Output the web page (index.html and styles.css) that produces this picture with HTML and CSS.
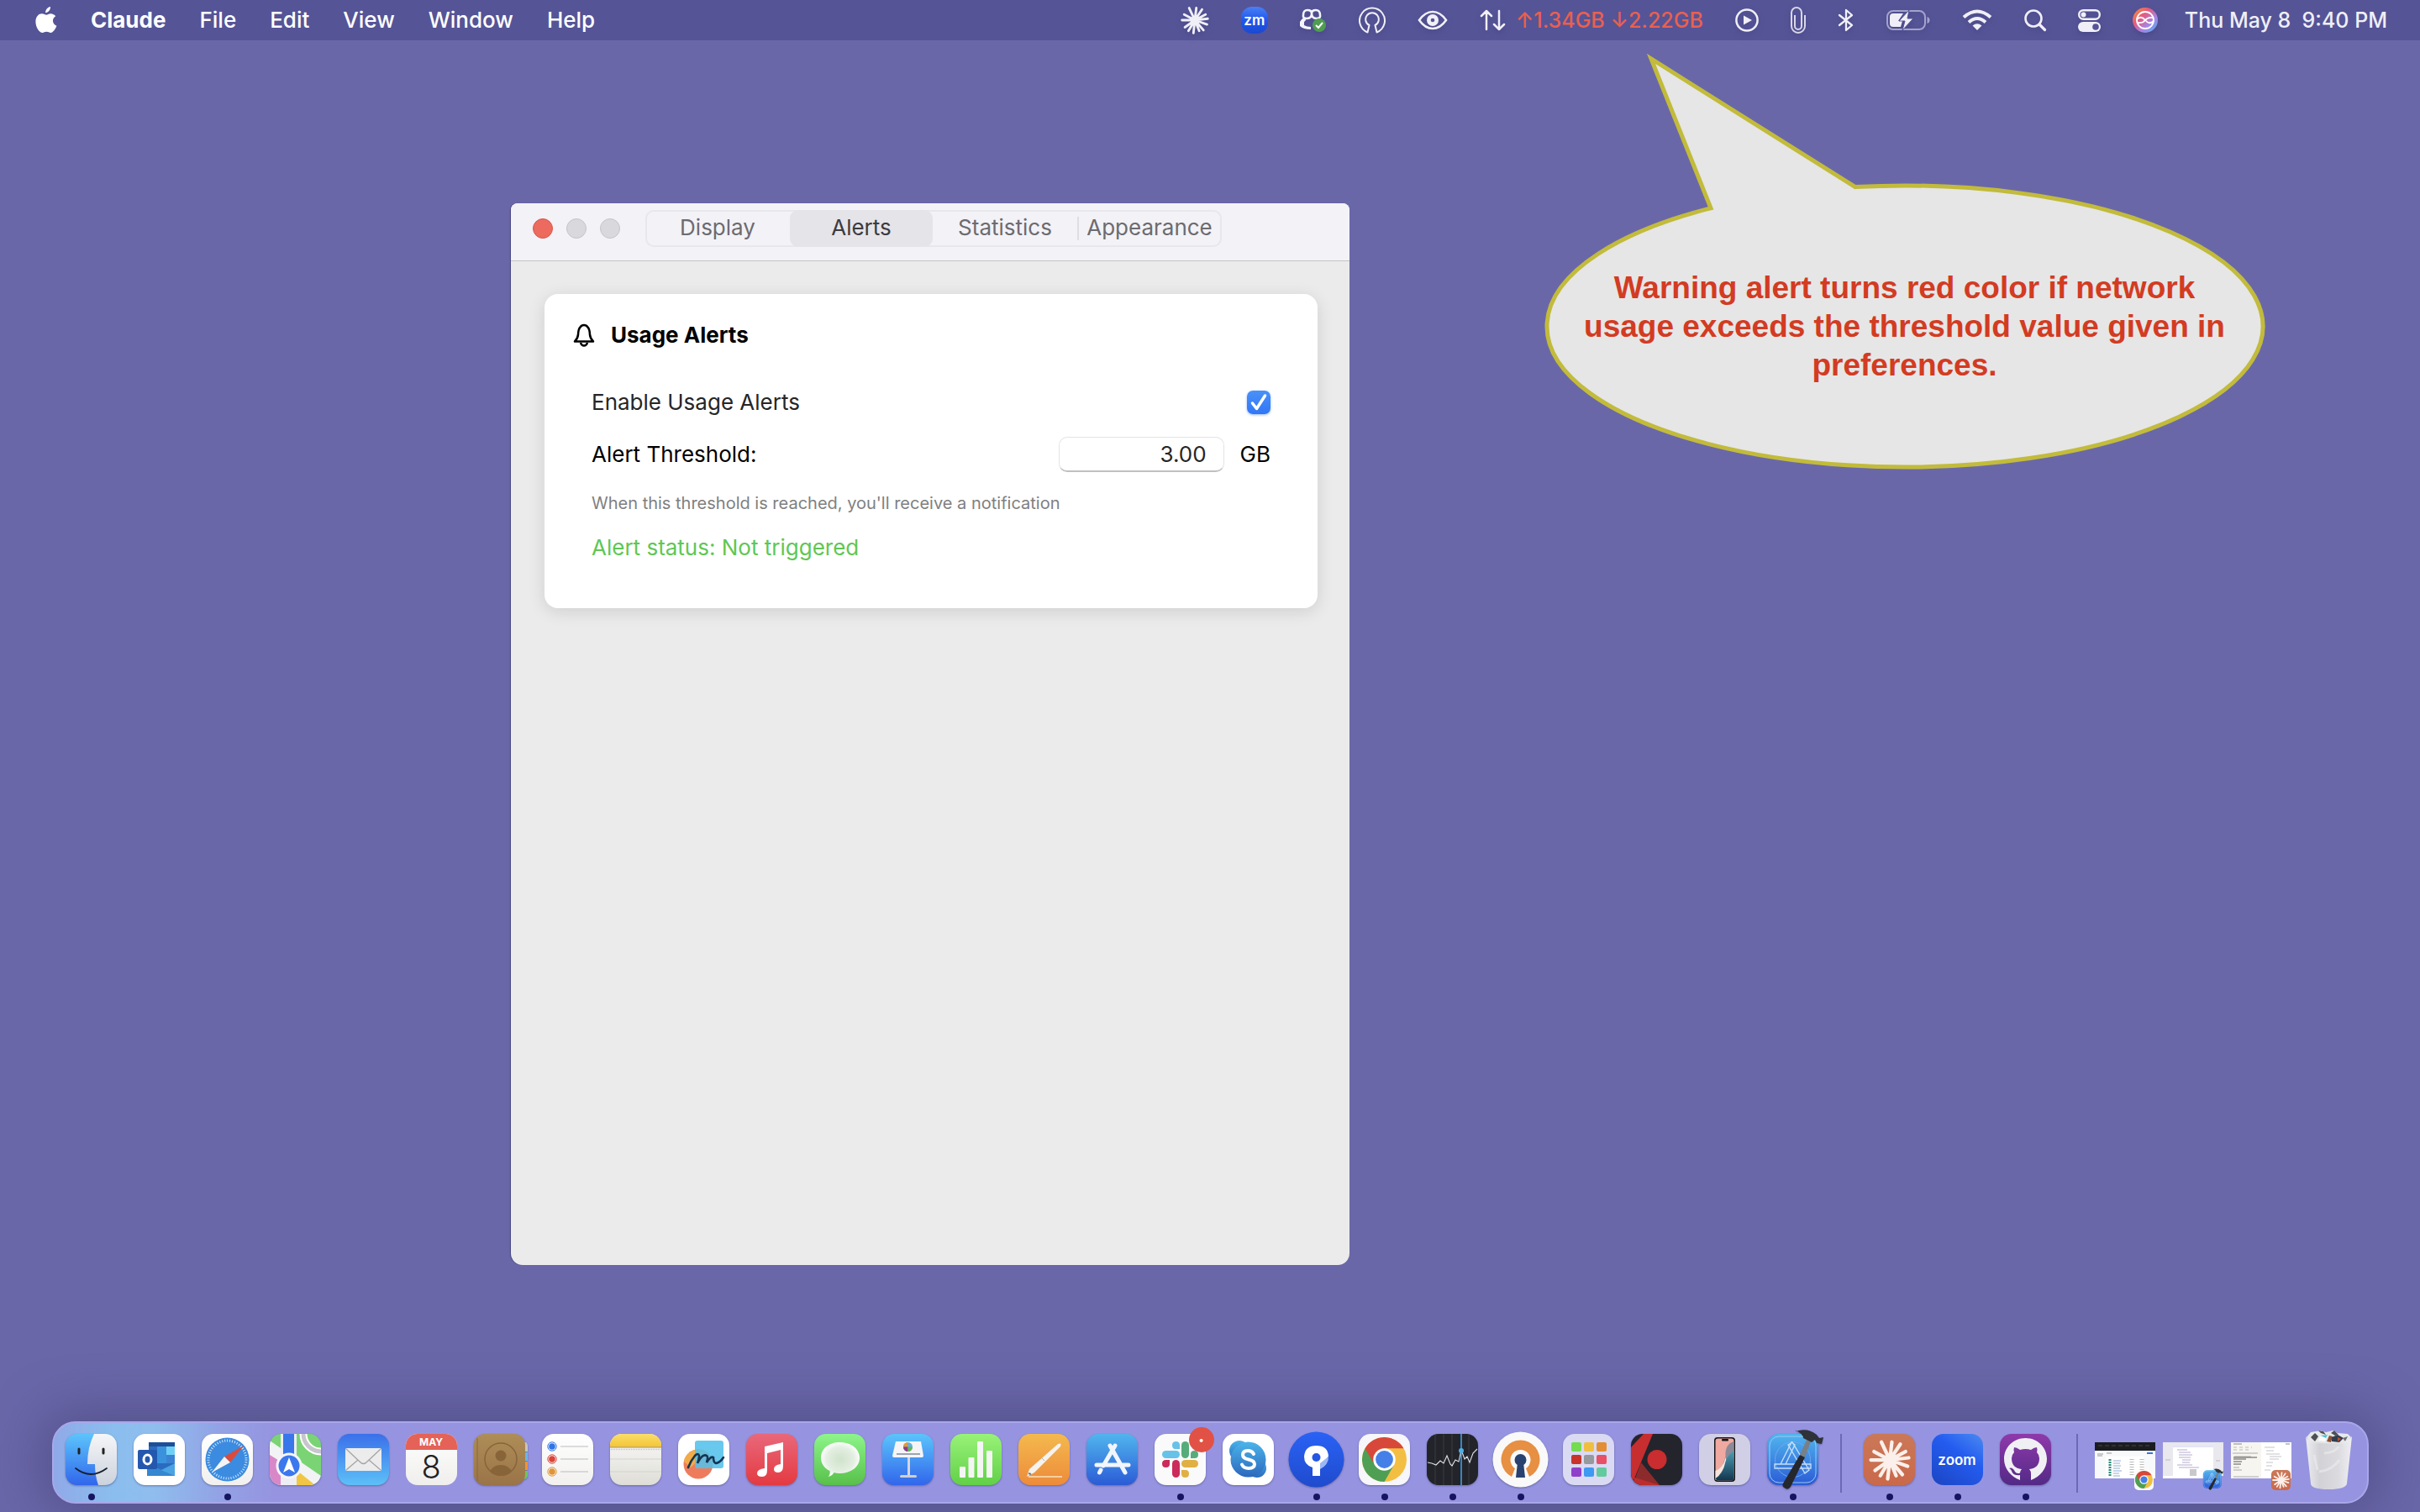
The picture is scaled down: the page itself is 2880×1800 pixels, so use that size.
FILE: index.html
```html
<!DOCTYPE html>
<html lang="en">
<head>
<meta charset="utf-8">
<title>Desktop</title>
<link rel="stylesheet" href="styles.css">
</head>
<body>
<svg class="defs" aria-hidden="true">
  <defs>
    <linearGradient id="g-blue" x1="0" y1="0" x2="0" y2="1"><stop offset="0" stop-color="#5cc4fb"/><stop offset="1" stop-color="#3166ec"/></linearGradient>
    <linearGradient id="g-mail" x1="0" y1="0" x2="0" y2="1"><stop offset="0" stop-color="#3a70ea"/><stop offset="1" stop-color="#5dc0f7"/></linearGradient>
    <linearGradient id="g-grey" x1="0" y1="0" x2="0" y2="1"><stop offset="0" stop-color="#f5f6f8"/><stop offset="1" stop-color="#ccd2dc"/></linearGradient>
    <linearGradient id="g-white" x1="0" y1="0" x2="0" y2="1"><stop offset="0" stop-color="#fff"/><stop offset="1" stop-color="#f1f0ee"/></linearGradient>
    <linearGradient id="g-yellow" x1="0" y1="0" x2="0" y2="1"><stop offset="0" stop-color="#f9de6b"/><stop offset="1" stop-color="#f4c433"/></linearGradient>
    <linearGradient id="g-notes" x1="0" y1="0" x2="0" y2="1"><stop offset="0" stop-color="#fafafa"/><stop offset="1" stop-color="#deddd6"/></linearGradient>
    <linearGradient id="g-red" x1="0" y1="0" x2="0" y2="1"><stop offset="0" stop-color="#e9687a"/><stop offset="1" stop-color="#e43a41"/></linearGradient>
    <linearGradient id="g-green" x1="0" y1="0" x2="0" y2="1"><stop offset="0" stop-color="#8df58a"/><stop offset="1" stop-color="#58c04a"/></linearGradient>
    <linearGradient id="g-lime" x1="0" y1="0" x2="0" y2="1"><stop offset="0" stop-color="#98f277"/><stop offset="1" stop-color="#62d048"/></linearGradient>
    <linearGradient id="g-orange" x1="0" y1="0" x2="0" y2="1"><stop offset="0" stop-color="#f4b94e"/><stop offset="1" stop-color="#ed8b3a"/></linearGradient>
    <linearGradient id="g-store" x1="0" y1="0" x2="0" y2="1"><stop offset="0" stop-color="#51b5ee"/><stop offset="1" stop-color="#2b5bd6"/></linearGradient>
    <linearGradient id="g-brown" x1="0" y1="0" x2="0" y2="1"><stop offset="0" stop-color="#ae8d57"/><stop offset="1" stop-color="#9a7448"/></linearGradient>
    <linearGradient id="g-purple" x1="0" y1="0" x2="0" y2="1"><stop offset="0" stop-color="#8f39ab"/><stop offset="1" stop-color="#532a86"/></linearGradient>
    <linearGradient id="g-src" x1="0" y1="0" x2="0" y2="1"><stop offset="0" stop-color="#2a62f5"/><stop offset="1" stop-color="#1f4bcd"/></linearGradient>
    <linearGradient id="g-skype" x1="0" y1="0" x2="0" y2="1"><stop offset="0" stop-color="#4bb4ea"/><stop offset="1" stop-color="#2b68bd"/></linearGradient>
    <linearGradient id="g-clay" x1="0" y1="0" x2="0" y2="1"><stop offset="0" stop-color="#cb7858"/><stop offset="1" stop-color="#c9694a"/></linearGradient>
    <linearGradient id="g-bin" x1="0" y1="0" x2="1" y2="0"><stop offset="0" stop-color="#f0f0f2"/><stop offset=".3" stop-color="#d4d4d6"/><stop offset=".7" stop-color="#dededf"/><stop offset="1" stop-color="#f3f3f4"/></linearGradient>
    <linearGradient id="g-sea" x1="0" y1="0" x2="0" y2="1"><stop offset="0" stop-color="#4f9fb5"/><stop offset="1" stop-color="#12364f"/></linearGradient>
    <linearGradient id="g-siri" x1="0" y1="0" x2="1" y2="1"><stop offset="0" stop-color="#f0a030"/><stop offset=".35" stop-color="#e8597c"/><stop offset=".65" stop-color="#a884e6"/><stop offset="1" stop-color="#41b6f5"/></linearGradient>
    <radialGradient id="g-bubble"><stop offset="0" stop-color="#cfe3cb"/><stop offset=".7" stop-color="#e3eee1"/><stop offset="1" stop-color="#fafcfa"/></radialGradient>
    <clipPath id="tile"><rect width="61" height="61" rx="14"/></clipPath>
    <symbol id="burst" viewBox="-20 -20 40 40">
      <g stroke="currentColor" stroke-width="3.400" stroke-linecap="round">
        <path d="M0 0 2-17M0 0 10-15M0 0 15-8M0 0 18-2M0 0 17 6M0 0 12 14M0 0 6 15M0 0-2 18M0 0-9 15M0 0-14 10M0 0-18 0M0 0-15-8M0 0-8-17" />
      </g>
      <circle r="6" fill="currentColor"/>
    </symbol>
    <symbol id="chrome" viewBox="0 0 54 54">
      <circle cx="27" cy="27" r="27" fill="#f3bf42"/>
      <path d="M27 27 3.600 13.500A27 27 0 0 0 27 54L38.700 33.700z" fill="#4e9f53"/>
      <path d="M27 13.500H50.400A27 27 0 0 0 3.600 13.500L15.300 33.700z" fill="#d8483a"/>
      <circle cx="27" cy="27" r="13.500" fill="#fff"/>
      <circle cx="27" cy="27" r="10.600" fill="#4580e8"/>
    </symbol>
    <symbol id="xcode" viewBox="0 0 68 78">
      <rect x="0" y="6" width="61" height="61" rx="14" fill="url(#g-store)"/>
      <rect x="3" y="9" width="55" height="55" rx="11" fill="none" stroke="#9bc9f5" stroke-width="1"/>
      <circle cx="30.500" cy="36.500" r="21" fill="none" stroke="#6ba9f0" stroke-width="1"/>
      <g fill="none" stroke="#c3defa" stroke-width="1.400"><path d="m25 19 5-3 20 33-5 4zM33 19l-4-3-13 26h6zM9 42h43v5H9z"/></g>
      <path d="M39 31 47 13 52 15 45 34z" fill="#7a7f86"/>
      <path d="M39 31 45 34 28 69q-3 4-6 2-5-2-3-6z" fill="#25272d"/>
      <path d="M34 3Q48-2 59 7l3 4 5-1-2 8-6-1-2-4-4 3-10-5q0-5-9-9z" fill="#2f3238"/>
    </symbol>
  </defs>
</svg>

<header class="menubar">
  <nav class="menus">
    <button class="menu-icon" aria-label="System menu"><svg width="26" height="32" viewBox="0 0 26 32"><path fill="#fff" d="M18 0c.3 3.600-2.700 7.200-5.800 7.200C11.800 3.800 15 .4 18 0zM18.200 8.200c2.600 0 4.700 1.300 6 3.100-4.900 3-4 9.400 1.200 11.400-1.300 3.600-4.300 8.300-7.100 8.300-1.800 0-2.600-1.200-4.900-1.200S10.200 31 8.600 31C4.500 31 .4 24 .4 17.800.4 11.600 4.300 8.300 7.900 8.300c2.200 0 4 1.500 5.300 1.500 1.300 0 3-1.600 5-1.600z"/></svg></button>
    <button class="menu app">Claude</button>
    <button class="menu">File</button>
    <button class="menu">Edit</button>
    <button class="menu">View</button>
    <button class="menu">Window</button>
    <button class="menu">Help</button>
  </nav>
  <div class="status">
    <button aria-label="Claude"><svg width="34" height="34"><use href="#burst"/></svg></button>
    <button class="zm">zm</button>
    <button aria-label="Copilot"><svg width="32" height="30" viewBox="0 0 32 30"><g fill="none" stroke="#f4f3fa" stroke-width="2.600"><path d="M14 7q0 6-5.500 6T4 9q0-6 5-6 5 0 5 4zM14 7q0 6 5.500 6T24 9q0-6-5-6-5 0-5 4z"/></g><path d="M5 12q-4 2-5 5v5q4 4 13 4v-3q-5 0-8-2v-4q3-2 2-5z" fill="#f4f3fa"/><circle cx="23" cy="21" r="8" fill="#4f9d51"/><path d="m19 21 3 3 5-6" fill="none" stroke="#fff" stroke-width="2"/></svg></button>
    <button aria-label="VPN"><svg width="32" height="32" viewBox="0 0 32 32"><path d="M10.500 30.500a15 15 0 1 1 11 0L19.500 22a7.800 7.800 0 1 0-7 0z" fill="none" stroke="#f0eff7" stroke-width="2" stroke-linejoin="round"/></svg></button>
    <button aria-label="Visibility"><svg width="36" height="24" viewBox="0 0 36 24"><path d="M2 12Q9 2 18 2t16 10Q27 22 18 22T2 12z" fill="none" stroke="#f0eff7" stroke-width="2.600"/><circle cx="18" cy="12" r="7" fill="#f0eff7"/><circle cx="18" cy="12" r="2.300" fill="#555497"/></svg></button>
    <button class="traffic"><svg width="31" height="26" viewBox="0 0 31 26"><path d="M8 24V2M2 8l6-6 6 6M23 2v22m-6-6 6 6 6-6" fill="none" stroke="#f0eff7" stroke-width="2.500" stroke-linecap="round" stroke-linejoin="round"/></svg><span>↑1.34GB ↓2.22GB</span></button>
    <button aria-label="Now playing"><svg width="28" height="28" viewBox="0 0 28 28"><circle cx="14" cy="14" r="12.600" fill="none" stroke="#f0eff7" stroke-width="2.500"/><path d="m10 8.500 10 5.500-10 5.500z" fill="#f0eff7"/></svg></button>
    <button aria-label="Clipboard"><svg width="18" height="32" viewBox="0 0 18 32"><path d="M17 10v13a8 8 0 0 1-16 0V7a6 6 0 0 1 12 0v16a4 4 0 0 1-8 0V10" fill="none" stroke="#d8d7ea" stroke-width="2"/></svg></button>
    <button aria-label="Bluetooth"><svg width="20" height="28" viewBox="0 0 20 28"><path d="m2 8 15 12-7 6V2l7 6L2 20" fill="none" stroke="#f0eff7" stroke-width="2.300" stroke-linejoin="round" stroke-linecap="round"/></svg></button>
    <button aria-label="Battery"><svg width="52" height="26" viewBox="0 0 52 26"><rect x="1" y="2" width="45" height="22" rx="7" fill="none" stroke="#a4a3cb" stroke-width="2"/><path d="M48.500 9q3 1 3 4t-3 4z" fill="#a4a3cb"/><path d="M8 5h12l-6 9h5l-2 7H8q-4 0-4-4V9q0-4 4-4z" fill="#f0eff7"/><path d="M27 1 15 14h7l-3 11 13-14h-7z" fill="#f0eff7" stroke="#555497" stroke-width="1"/></svg></button>
    <button aria-label="Wi-Fi"><svg width="36" height="26" viewBox="0 0 36 26"><g fill="none" stroke="#f0eff7" stroke-width="4"><path d="M2 9.500q16-14 32 0M8 15.500q10-9 20 0"/></g><path d="m18 25-5.500-5.500q5.500-4.500 11 0z" fill="#f0eff7"/></svg></button>
    <button aria-label="Search"><svg width="26" height="26" viewBox="0 0 26 26"><circle cx="11" cy="11" r="9.500" fill="none" stroke="#f0eff7" stroke-width="2.600"/><path d="m18 18 6.500 6.500" stroke="#f0eff7" stroke-width="3.200" stroke-linecap="round"/></svg></button>
    <button aria-label="Control center"><svg width="27" height="27" viewBox="0 0 27 27"><rect x="1.200" y="1.200" width="24.600" height="10.500" rx="5.200" fill="none" stroke="#f0eff7" stroke-width="2.400"/><circle cx="6.500" cy="6.500" r="3" fill="#f0eff7"/><rect y="15" width="27" height="12" rx="6" fill="#f0eff7"/><circle cx="21" cy="21" r="3.800" fill="#555497"/></svg></button>
    <div class="clock-group">
      <button aria-label="Siri"><svg width="30" height="30" viewBox="0 0 30 30"><circle cx="15" cy="15" r="15" fill="url(#g-siri)"/><g fill="none" stroke="#fff" stroke-width="1.800"><circle cx="15" cy="15" r="10"/><path d="M5 14q5-5 10 1t10 1M6 18q6 1 9-3t9-3"/></g></svg></button>
      <button class="clock">Thu May 8&nbsp; 9:40 PM</button>
    </div>
  </div>
</header>

<main class="desktop">
  <section class="window" aria-label="Preferences">
    <div class="titlebar">
      <div class="lights">
        <button class="light close" aria-label="Close"></button>
        <button class="light" aria-label="Minimize"></button>
        <button class="light" aria-label="Zoom"></button>
      </div>
      <div class="tabs" role="tablist">
        <button role="tab">Display</button>
        <button role="tab" class="selected" aria-selected="true">Alerts</button>
        <button role="tab">Statistics</button>
        <button role="tab" class="divided">Appearance</button>
      </div>
    </div>
    <div class="card">
      <h2><svg width="26" height="28" viewBox="0 0 26 28"><path d="M2 21.500h22q-3.500-3.500-4-8-.3-7-2.500-9Q16 2 13 2T8.500 4.500Q6.300 6.500 6 13.500q-.5 4.500-4 8z" fill="none" stroke="#000" stroke-width="2.500" stroke-linejoin="round"/><path d="M9 23q1 3.500 4 3.500t4-3.500" fill="none" stroke="#000" stroke-width="2.500"/></svg>Usage Alerts</h2>
      <div class="rows">
        <div class="row"><label class="soft" for="enable">Enable Usage Alerts</label><span class="check"><input type="checkbox" id="enable" checked><svg width="28" height="28" viewBox="0 0 28 28"><path d="m6.500 15 5 6.500L21.500 6" fill="none" stroke="#fff" stroke-width="3.500" stroke-linecap="round" stroke-linejoin="round"/></svg></span></div>
        <div class="row"><label for="limit">Alert Threshold:</label><span class="field"><input type="text" id="limit" value="3.00">GB</span></div>
        <p class="hint">When this threshold is reached, you'll receive a notification</p>
        <p class="state">Alert status: Not triggered</p>
      </div>
    </div>
  </section>

  <aside class="balloon">
    <svg width="861" height="504" viewBox="0 0 861 504"><path d="M372 162.614A426 167.500 0 1 1 200 187.764L129 10z" fill="#e6e6e6" stroke="#c2bb3b" stroke-width="5"/></svg>
    <p>Warning alert turns red color if network<br>usage exceeds the threshold value given in<br>preferences.</p>
  </aside>
</main>

<footer class="dock">
  <button class="app-icon running" aria-label="Finder"><svg viewBox="0 0 61 61"><g clip-path="url(#tile)"><path fill="url(#g-blue)" d="M0 0h61v61H0z"/><path d="M34 0q-8 16-8 36h9q0 14 4 25h22V0z" fill="url(#g-grey)"/></g><path d="M16 18v5M45 18v5" stroke="#222" stroke-width="3" stroke-linecap="round"/><path d="M12 41q18 14 37 0" fill="none" stroke="#16202e" stroke-width="1.800" stroke-linecap="round"/></svg></button>
  <button class="app-icon" aria-label="Outlook"><svg viewBox="0 0 61 61"><rect width="61" height="61" rx="14" fill="#fff"/><path d="M18 10h31v40H16V30h2z" fill="#2a6bc0"/><path d="M18 10h31v5H18z" fill="#1d4f99"/><path d="M39 15h10v10H39z" fill="#6fd0f7"/><path d="M28 15h11v20H28z" fill="#3a92dc"/><path d="M39 25h10v10H39z" fill="#3c82d2"/><path d="M16 50V36l17 7 16-8v15z" fill="#4aa3e2"/><path d="m16 36 33 14H16z" fill="#3587d0"/><rect x="5" y="19" width="23" height="23" rx="2" fill="#2458ae"/><ellipse cx="16.500" cy="30.500" rx="4.500" ry="5.500" fill="none" stroke="#fff" stroke-width="3"/></svg></button>
  <button class="app-icon running" aria-label="Safari"><svg viewBox="0 0 61 61"><rect width="61" height="61" rx="14" fill="url(#g-white)"/><circle cx="30.500" cy="30.500" r="26" fill="#3b8be0"/><circle cx="30.500" cy="30.500" r="22.500" fill="none" stroke="#d3e7fa" stroke-width="3" stroke-dasharray="1 2"/><path d="M50 14 27 27l7 7z" fill="#dc4a3c"/><path d="m12 46 15-19 7 7z" fill="#f4f4f4"/></svg></button>
  <button class="app-icon" aria-label="Maps"><svg viewBox="0 0 61 61"><g clip-path="url(#tile)"><path fill="#7ad474" d="M0 0h61v61H0z"/><path d="M0 8 61 50v11H0z" fill="#f2f3f4"/><path d="M0 25l13 8v28H0z" fill="#d888c8"/><path d="M33 44 54 61H30z" fill="#f1c644"/><path d="M13 0h19v61H13z" fill="#ededf3"/><path d="M16 0h13v40H16z" fill="#3877ea"/><circle cx="61" cy="0" r="21" fill="none" stroke="#fff" stroke-width="9"/><circle cx="61" cy="0" r="21" fill="none" stroke="#c6c6cc" stroke-width="5"/></g><circle cx="23" cy="38" r="14" fill="#3b78ee" stroke="#f5f5f8" stroke-width="3"/><path d="m23 28 7 18-7-4-7 4z" fill="#fff"/></svg></button>
  <button class="app-icon" aria-label="Mail"><svg viewBox="0 0 61 61"><rect width="61" height="61" rx="14" fill="url(#g-mail)"/><rect x="9" y="17" width="43" height="27" rx="2" fill="#ececec"/><path d="m10 18 16 15q4.500 5 9 0l16-15M10 43l14-12M51 43 37 31" fill="none" stroke="#a5a5a5" stroke-width="1.300"/></svg></button>
  <button class="app-icon calendar" aria-label="Calendar"><span class="month">MAY</span><span class="day">8</span></button>
  <button class="app-icon" aria-label="Contacts"><svg viewBox="0 0 61 61"><path d="M58 10h4q2 2 2 4v7h-6z" fill="#c8c6b8"/><path d="M58 22h6v10h-6z" fill="#68b7e8"/><path d="M58 33h6v10h-6z" fill="#ef9336"/><path d="M58 44h6v6q-1 4-6 4z" fill="#69c95c"/><rect width="61" height="61" rx="13" fill="url(#g-brown)"/><path d="M4 5v51" stroke="#8a6839" stroke-width="1"/><g fill="#886439"><circle cx="32" cy="26" r="6.500"/><path d="M19 45q4-8 13-8t13 8q-5 5-13 5t-13-5z"/></g><circle cx="32" cy="30" r="19" fill="none" stroke="#886439" stroke-width="1.500"/></svg></button>
  <button class="app-icon" aria-label="Reminders"><svg viewBox="0 0 61 61"><rect width="61" height="61" rx="14" fill="url(#g-white)"/><g stroke="#bbb" stroke-width="1.200"><path d="M22 15h33M22 30h33M22 45h33"/></g><g stroke-width="1"><circle cx="12" cy="15" r="3.800" fill="#3074e8"/><circle cx="12" cy="15" r="5.200" fill="none" stroke="#3074e8"/><circle cx="12" cy="30" r="3.800" fill="#dc4438"/><circle cx="12" cy="30" r="5.200" fill="none" stroke="#dc4438"/><circle cx="12" cy="45" r="3.800" fill="#e29536"/><circle cx="12" cy="45" r="5.200" fill="none" stroke="#e29536"/></g></svg></button>
  <button class="app-icon" aria-label="Notes"><svg viewBox="0 0 61 61"><g clip-path="url(#tile)"><path fill="url(#g-notes)" d="M0 0h61v61H0z"/><path fill="url(#g-yellow)" d="M0 0h61v16H0z"/></g><path d="M0 16h61" stroke="#9a958a" stroke-width="1"/><path d="M1 18.500h59" stroke="#c4c2bb" stroke-width="1.500" stroke-dasharray="1 1"/><path d="M0 30h61M0 45h61" stroke="#d4d3ce" stroke-width="1"/></svg></button>
  <button class="app-icon" aria-label="Freeform"><svg viewBox="0 0 61 61"><rect width="61" height="61" rx="14" fill="#fff"/><circle cx="24" cy="36" r="17.500" fill="#ee7c5c"/><path d="M7 33a17.500 17.500 0 0 1 28-11L15 40z" fill="#f1ac4a"/><rect x="20" y="8" width="34" height="33" rx="3" fill="#54c0ea" opacity=".88"/><path d="M12 40q3-8 8-14 4-4 5 0 0 4-2 9 6-12 11-9 2 1 0 8 5-8 8-6 0 6 3 7 5-1 9-7" fill="none" stroke="#153350" stroke-width="2.600" stroke-linecap="round"/></svg></button>
  <button class="app-icon" aria-label="Music"><svg viewBox="0 0 61 61"><rect width="61" height="61" rx="14" fill="url(#g-red)"/><path d="M22 15 44 10v28q0 8-6 8-5 0-5-4 0-5 8-6V19l-16 4v20q0 8-6 8-6 0-6-4 0-5 9-6z" fill="#fff"/></svg></button>
  <button class="app-icon" aria-label="Messages"><svg viewBox="0 0 61 61"><rect width="61" height="61" rx="14" fill="url(#g-green)"/><path d="M30.500 10C44 10 54 18 54 28.500S44 47 30.500 47q-4 0-7-1-2 4-7 5 3-3 2-7C12 41 8 35 8 28.500 8 18 17 10 30.500 10z" fill="url(#g-bubble)"/></svg></button>
  <button class="app-icon" aria-label="Keynote"><svg viewBox="0 0 61 61"><rect width="61" height="61" rx="14" fill="url(#g-blue)"/><path d="M30 27h3v24h-3z" fill="#d4d6da"/><rect x="21" y="49" width="20" height="3" rx="1.500" fill="#cfcfd2"/><path d="M16 9h30l3 17q0 2-2 2H14q-2 0-2-2z" fill="#f5f5f7"/><path d="M17 24h28" stroke="#7f8a9b" stroke-width="1.500"/><circle cx="30.500" cy="15.500" r="5.500" fill="#5fb1e0"/><path d="M30.500 15.500V10a5.500 5.500 0 0 0-5.500 5.500z" fill="#e09a35"/><path d="M30.500 15.500H25a5.500 5.500 0 0 0 5.500 5.500z" fill="#94368b"/><path d="M30.500 15.500h5.500a5.500 5.500 0 0 1-5.500 5.500z" fill="#64b84f"/></svg></button>
  <button class="app-icon" aria-label="Numbers"><svg viewBox="0 0 61 61"><rect width="61" height="61" rx="14" fill="url(#g-lime)"/><g fill="#f4f6f4"><rect x="11" y="39" width="7" height="13" rx="1"/><rect x="21.500" y="28" width="7" height="24" rx="1"/><rect x="32" y="9" width="7" height="43" rx="1"/><rect x="43" y="20" width="7" height="32" rx="1"/></g></svg></button>
  <button class="app-icon" aria-label="Pages"><svg viewBox="0 0 61 61"><rect width="61" height="61" rx="14" fill="url(#g-orange)"/><path d="M12 51h40" stroke="#f8cf9b" stroke-width="1.800"/><path d="m10 51 3-9 34-30q5-2 3 3L19 46z" fill="#f5f3f0"/><path d="m12 47 3 1" stroke="#777" stroke-width="2"/><path d="m28 29 3 3" stroke="#b5b0a8"/></svg></button>
  <button class="app-icon" aria-label="App Store"><svg viewBox="0 0 61 61"><rect width="61" height="61" rx="14" fill="url(#g-store)"/><g stroke="#f1f5fc" stroke-width="5" stroke-linecap="round"><path d="M12 37h38M28 14l18 32M34 14 20 38M17 43l-1.500 3"/></g></svg></button>
  <button class="app-icon running" aria-label="Slack, new activity"><svg viewBox="0 0 61 61"><rect width="61" height="61" rx="14" fill="#fafafa"/><g fill="#67c2e8"><rect x="9" y="20" width="21" height="9" rx="4.500"/><path d="M30 18h-5q-4 0-4-4.500T25.500 9 30 13.500z"/></g><g fill="#56ad7b"><rect x="32" y="9" width="9" height="20" rx="4.500"/><path d="M43 29v-5q0-4 4.500-4t4.500 4.500-4.500 4.500z"/></g><g fill="#cb2a5b"><rect x="21" y="31" width="9" height="21" rx="4.500"/><path d="M18 31v5q0 4-4.500 4T9 35.500 13.500 31z"/></g><g fill="#e0b044"><rect x="32" y="31" width="20" height="9" rx="4.500"/><path d="M32 43h5q4 0 4 4.500t-4.500 4.500-4.500-4.500z"/></g></svg><span class="badge">•</span></button>
  <button class="app-icon" aria-label="Skype"><svg viewBox="0 0 61 61"><rect width="61" height="61" rx="14" fill="#fff"/><g fill="url(#g-skype)"><circle cx="20" cy="20" r="12"/><circle cx="41" cy="41" r="11"/><circle cx="30.500" cy="30.500" r="21"/></g><path d="M37 24q-2-4-7-4-6 0-6 5 0 4 7 5.500t7 5.500q0 5-7 5-6 0-8-4.500" fill="none" stroke="#fff" stroke-width="4" stroke-linecap="round"/></svg></button>
  <button class="app-icon running" aria-label="Sourcetree"><svg viewBox="0 0 61 61"><circle cx="30.500" cy="30.500" r="33" fill="url(#g-src)"/><path d="M45 28q0 9-10 14V30z" fill="#9cb7f4"/><path d="M30.500 14q14 0 14.500 13L35 35v15h-9V40q-10-3-10-13 1-13 14.500-13z" fill="#fff"/><circle cx="30.500" cy="28" r="5" fill="#2557e4"/></svg></button>
  <button class="app-icon running" aria-label="Chrome"><svg viewBox="0 0 61 61"><rect width="61" height="61" rx="14" fill="#f6f6fb"/><use href="#chrome" x="4" y="4" width="53" height="53"/></svg></button>
  <button class="app-icon running" aria-label="Activity"><svg viewBox="0 0 61 61"><rect width="61" height="61" rx="14" fill="#232429"/><path d="M10 1v59M20 0v61M30 0v61M50 1v59" stroke="#3c3d43" stroke-width="1"/><path d="M41 0v61" stroke="#3a86bd" stroke-width="2"/><path d="m1 34 5 1 5 2 5-5 4 3 4-9 4 10 2 2 4-7 4 2 3-14 4 11 3-3 3 7 4-11 5-5" fill="none" stroke="#dfe0e4" stroke-width="1.100"/><circle cx="41" cy="20" r="3" fill="#50aee8"/></svg></button>
  <button class="app-icon running" aria-label="OpenVPN"><svg viewBox="0 0 61 61"><circle cx="30.500" cy="30.500" r="33" fill="#f9f9f9"/><path d="M20 51A23 23 0 1 1 41 51L37 41a12 12 0 1 0-13 0z" fill="#e78f42"/><circle cx="30.500" cy="31" r="7" fill="#28416e"/><path d="M27 34h7l2 18H25z" fill="#28416e"/></svg></button>
  <button class="app-icon" aria-label="Launchpad"><svg viewBox="0 0 61 61"><rect width="61" height="61" rx="14" fill="#dadaf3"/><rect x="10" y="10" width="12" height="11" rx="2" fill="#75dc50"/><rect x="25" y="10" width="12" height="11" rx="2" fill="#f1bf40"/><rect x="40" y="10" width="12" height="11" rx="2" fill="#e38e35"/><rect x="10" y="25" width="12" height="11" rx="2" fill="#c8342a"/><rect x="25" y="25" width="12" height="11" rx="2" fill="#949a9d"/><rect x="40" y="25" width="12" height="11" rx="2" fill="#e75066"/><rect x="10" y="40" width="12" height="11" rx="2" fill="#8f40c9"/><rect x="25" y="40" width="12" height="11" rx="2" fill="#3e99f2"/><rect x="40" y="40" width="12" height="11" rx="2" fill="#63ca9e"/></svg></button>
  <button class="app-icon" aria-label="Recorder"><svg viewBox="0 0 61 61"><g clip-path="url(#tile)"><path fill="#24242d" d="M0 0h61v61H0z"/><path d="M15 0h11L4 53l-4 4V16z" fill="#c72e30"/><path d="m12 34 22 27H2z" fill="#8d2b2c"/><path d="M4 52 34 61H2z" fill="#bd2d2e"/></g><circle cx="31" cy="30.500" r="11.500" fill="#c92d2f"/></svg></button>
  <button class="app-icon" aria-label="iPhone Mirroring"><svg viewBox="0 0 61 61"><rect width="61" height="61" rx="14" fill="#d0cfe5"/><rect x="18" y="4" width="25" height="53" rx="4" fill="#151619"/><rect x="19.500" y="5.500" width="22" height="50" rx="3" fill="#f0a9a0"/><path d="M41.500 9q-11 3-10 18l-9 25 19-24z" fill="#8c8a98"/><path d="M19.500 44q9-3 12-16l2 8-14 19z" fill="#f4e6de"/><path d="M41.500 20q-7 4-10 13-3 15-12 20 1 2.500 4 2.500h15q3 0 3-3z" fill="url(#g-sea)"/><rect x="27" y="6" width="8" height="2.500" rx="1" fill="#151619"/></svg></button>
  <button class="app-icon running" aria-label="Xcode"><svg viewBox="0 0 61 61"><use href="#xcode" y="-6" width="68" height="78"/></svg></button>
  <hr class="divider">
  <button class="app-icon running" aria-label="Claude"><svg class="pale" viewBox="0 0 61 61"><rect width="61" height="61" rx="14" fill="url(#g-clay)"/><use href="#burst" x="6" y="6" width="50" height="50"/></svg></button>
  <button class="app-icon running zoom-app">zoom</button>
  <button class="app-icon running" aria-label="GitHub"><svg viewBox="0 0 61 61"><rect width="61" height="61" rx="14" fill="url(#g-purple)"/><path d="M30.500 5C16 5 5 16 5 30c0 11 8 21 19 25v-6c-7 1-9-2-10-5q-1-2-3-3 4-2 7 4 2 3 6 1.500 0-2.500 2-4.500c-8-1-12-5-12-13q0-4 3-7-1-3 0-6 3 0 7 3 6.500-2 13 0 4-3 7-3 1 3 0 6 3 3 3 7c0 8-4 12-12 13q2 2 2 6v7c11-4 19-14 19-25C56 16 45 5 30.500 5z" fill="#f0f0f4"/></svg></button>
  <hr class="divider last">
  <div class="minimized">
    <button aria-label="Browser window"><svg viewBox="0 0 72 60"><path fill="#f8f9fa" d="M0 6h72v42H0z"/><path fill="#1b1c1f" d="M0 5h72v10H0z"/><path d="M4 9h62" stroke="#43464b" stroke-dasharray="5 3"/><path d="M62 18h7" stroke="#3a75d8" stroke-width="2"/><path d="M3 19h7M3 21h6M14 18h6" stroke="#999" stroke-width="1"/><path d="M13 22h45v26H13z" fill="#fff"/><path d="M18 25v21" stroke="#2f8a7b" stroke-width="3" stroke-dasharray="2 1"/><path d="M22 27h9M22 30h8M22 33h9M22 36h8M22 39h10M22 42h7M22 45h8" stroke="#91add0"/><path d="M44 25v21M56 25v21" stroke="#bbb" stroke-width="5" stroke-dasharray="1 2"/><rect x="47" y="39" width="23" height="23" rx="5" fill="#fafafa"/><use href="#chrome" x="48" y="39" width="21" height="21"/></svg></button>
    <button aria-label="Editor window"><svg viewBox="0 0 72 60"><path fill="#e8e8ee" d="M0 5h72v40H0z"/><path fill="#fff" d="M12 9h48v39H12z"/><path d="M0 45h60v3H0z" fill="#fff"/><path d="M12 10h48" stroke="#c5c9ee"/><path d="M17 14h12M19 17h14M19 20h16M19 23h14M23 26h10M23 29h9M17 32h18M19 35h24" stroke="#b6abcf"/><path d="M3 26h6M63 27h5" stroke="#bbb"/><path d="M32 37h8v8h-8z" fill="#c9c9cc"/><use href="#xcode" x="47" y="36" width="26" height="28"/></svg></button>
    <button aria-label="Chat window"><svg class="pale" viewBox="0 0 72 60"><path fill="#f7f5f0" d="M0 5h72v43H0z"/><path fill="#fff" d="M36 5h36v43H36z"/><path d="M3 7h10M65 7h5" stroke="#888"/><path d="M3 11h22M3 14h20" stroke="#bbb" stroke-dasharray="4 3"/><path d="M2 18h30M4 22h20" stroke="#aaa"/><path d="M3 23h28M3 25h15M3 28h10M3 31h9" stroke="#565656"/><path d="M3 35h7M3 38h10M3 46h30" stroke="#aaa"/><path d="M40 11h12M42 15h9M42 19h16M46 22h14M46 25h11M42 29h8M42 33h7M40 38h7" stroke="#c4c4c9"/><rect x="48" y="38" width="23" height="24" rx="5" fill="url(#g-clay)"/><use href="#burst" x="49" y="39" width="21" height="22"/></svg></button>
  </div>
  <button class="bin" aria-label="Trash"><svg width="55" height="71" viewBox="0 0 55 71"><path d="M1 9 6 3 18 1 24 3 33 1 38 4 50 5 54 9 48 17H6z" fill="#e6e8ea"/><path d="m6 9 5-5 4 4-4 6zM15 1l6 1 3 4-6-2zM30 4l4-3 5 5-4 1z" fill="#4d5054"/><path d="m17 8 9-2-3 8-8-1z" fill="#f9fbfb"/><path d="m18 7 8-1-2 4z" fill="#4dc3d2"/><path d="m28 7 4 1-2 7-5-1z" fill="#8a5235"/><path d="m31 9 7-3 7 4-5 5-9-1z" fill="#343c4e"/><path d="m38 9 4 2-4 3z" fill="#b8562f"/><path d="m44 10 6-2-3 6z" fill="#6e7276"/><path d="M0 8q3 8 27 8t28-8l-6 56q-1 7-22 7T6 64z" fill="url(#g-bin)" opacity=".96"/><path d="M22 28q14-1 17-8M16 50q16-2 24-14M10 30l4 18" fill="none" stroke="#ececee" stroke-width="3" opacity=".6"/></svg></button>
</footer>
</body>
</html>
```
FILE: styles.css
```css
* { box-sizing: border-box; }

body {
  margin: 0;
  min-height: 100vh;
  display: flex;
  flex-direction: column;
  background: #6a67a9;
  font-family: Inter, "Liberation Sans", sans-serif;
  font-size: 26px;
  line-height: 32px;
  color: #000;
  overflow: hidden;
}

button {
  margin: 0;
  padding: 0;
  border: 0;
  background: none;
  font: inherit;
  color: inherit;
}

svg { display: block; overflow: visible; }
.defs { position: absolute; width: 0; height: 0; }

/* Menu bar */
.menubar {
  display: flex;
  justify-content: space-between;
  align-items: center;
  height: 48px;
  padding: 0 39px 0 42px;
  background: #555497;
  color: #f0eff7;
}
.menus, .status, .clock-group, .traffic { display: flex; align-items: center; }
.menus { gap: 40px; color: #fff; font-weight: 500; text-shadow: 0 3px 6px #3d3b7880; }
.menu.app { font-weight: 700; }
.status { gap: 38px; font-size: 25px; }
.status svg { filter: drop-shadow(0 3px 3px #3d3b7880); }
.clock-group { gap: 32px; }
.clock { font-weight: 500; white-space: nowrap; }
.traffic { gap: 12px; color: #e9604f; font-weight: 500; white-space: nowrap; }
.zm {
  width: 32px;
  height: 32px;
  border-radius: 13px;
  background: linear-gradient(#4b80f2, #1f57ee 50%, #1c49cf);
  color: #fff;
  font-size: 17px;
  font-weight: 600;
}

/* Desktop */
.desktop { position: relative; flex: 1; }

.window {
  position: absolute;
  left: 608px;
  top: 194px;
  width: 998px;
  height: 1264px;
  border-radius: 8px 8px 14px 14px;
  background: #ebebeb;
  box-shadow: -1px 0 1px #4b4883;
  overflow: hidden;
}
.titlebar {
  display: flex;
  gap: 30px;
  height: 69px;
  padding: 8px 26px;
  border-bottom: 1px solid #c3c3c6;
  background: #f3f2f7;
}
.lights { display: flex; gap: 16px; padding-top: 10px; }
.light {
  width: 24px;
  height: 24px;
  border: 1px solid #c5c4c9;
  border-radius: 50%;
  background: #d9d8dd;
}
.light.close { border-color: #d8574a; background: #ec6a5e; }
.tabs {
  display: grid;
  grid-template-columns: 172px 170px 172px 172px;
  height: 44px;
  border-radius: 10px;
  box-shadow: inset 0 0 0 2px #e8e7ec;
  color: #6c6b70;
}
.tabs button { padding-bottom: 2px; }
.tabs .selected { border-radius: 10px; background: #e5e4e9; color: #3c3b40; }
.tabs .divided { background: linear-gradient(#dfdee3, #dfdee3) 0 50% / 2px 28px no-repeat; }

.card {
  margin: 39px 38px 0 40px;
  padding: 33px 56px 56px 34px;
  border-radius: 16px;
  background: #fff;
  box-shadow: 0 4px 20px #0000001f;
}
h2 {
  display: flex;
  align-items: center;
  gap: 19px;
  margin: 0 0 48px;
  font-size: 26px;
  font-weight: 700;
}
.rows { display: flex; flex-direction: column; gap: 25px; padding-left: 22px; }
.row { display: flex; justify-content: space-between; align-items: center; }
.soft { color: #262626; }
.check { position: relative; width: 28px; height: 28px; }
.check input {
  appearance: none;
  width: 28px;
  height: 28px;
  margin: 0;
  border-radius: 7px;
  background: linear-gradient(#4a91f8, #3176f6);
  box-shadow: 0 1px 3px #3176f680;
  display: block;
}
.check svg { position: absolute; inset: 0; pointer-events: none; }
.field { display: flex; align-items: center; gap: 19px; }
.field input {
  width: 197px;
  height: 42px;
  padding: 0 20px;
  border: 1px solid #e4e4e4;
  border-bottom: 2px solid #c0c0c0;
  border-radius: 10px;
  background: #fff;
  font: inherit;
  color: #262626;
  text-align: right;
}
p { margin: 0; }
.hint { font-size: 20px; line-height: 24px; color: #808080; }
.state { color: #5fc754; }

.balloon { position: absolute; left: 1836px; top: 12px; width: 861px; }
.balloon p {
  position: absolute;
  inset: 260px 0 auto;
  font: bold 37px/46px "Liberation Sans", Arial, sans-serif;
  color: #d33b22;
  text-align: center;
}

/* Dock */
.dock {
  display: flex;
  align-items: flex-start;
  align-self: center;
  gap: 20px;
  height: 98px;
  margin-bottom: 10px;
  padding: 13px 18px 0 14px;
  border: 2px solid #a9a7ea;
  border-radius: 28px;
  background: linear-gradient(90deg, #90a9e8 0, #8abeee 70px, #8fbdee 120px, #92a3e5 195px, #9694e0 260px);
  box-shadow: 0 0 60px 10px #3c396b80;
}
.app-icon {
  position: relative;
  flex: none;
  width: 61px;
  height: 61px;
  border-radius: 14px;
}
.app-icon > svg { width: 61px; height: 61px; filter: drop-shadow(0 1px 1px #3c396b80); }
.running::after {
  content: "";
  position: absolute;
  left: 27px;
  top: 71px;
  width: 8px;
  height: 8px;
  border-radius: 50%;
  background: #171560;
}
.badge {
  position: absolute;
  right: -10px;
  top: -8px;
  width: 30px;
  height: 30px;
  border-radius: 50%;
  background: #e25145;
  color: #fff;
  font-size: 12px;
  line-height: 30px;
}
.calendar {
  display: flex;
  flex-direction: column;
  background: linear-gradient(#fff, #efeeec);
  overflow: hidden;
}
.month { width: 100%; background: #e46257; color: #fff; font-size: 12px; font-weight: 700; line-height: 19px; }
.day { width: 100%; color: #222; font-size: 38px; font-weight: 300; line-height: 40px; }
.zoom-app {
  background: linear-gradient(215deg, #4b8bf0, #245cf0 40%, #1b45c2);
  color: #fff;
  font-size: 17px;
  font-weight: 600;
}
.divider { width: 2px; height: 70px; margin: 0 6px; border: 0; background: #6d69b3; }
.divider.last { margin: 0 0 0 10px; }
.minimized { display: flex; gap: 9px; }
.minimized svg { width: 72px; height: 60px; }
.minimized button { margin-top: 5px; }
.pale { color: #fbf0eb; }
.bin { margin: -5px 0 0 -3px; }
```
